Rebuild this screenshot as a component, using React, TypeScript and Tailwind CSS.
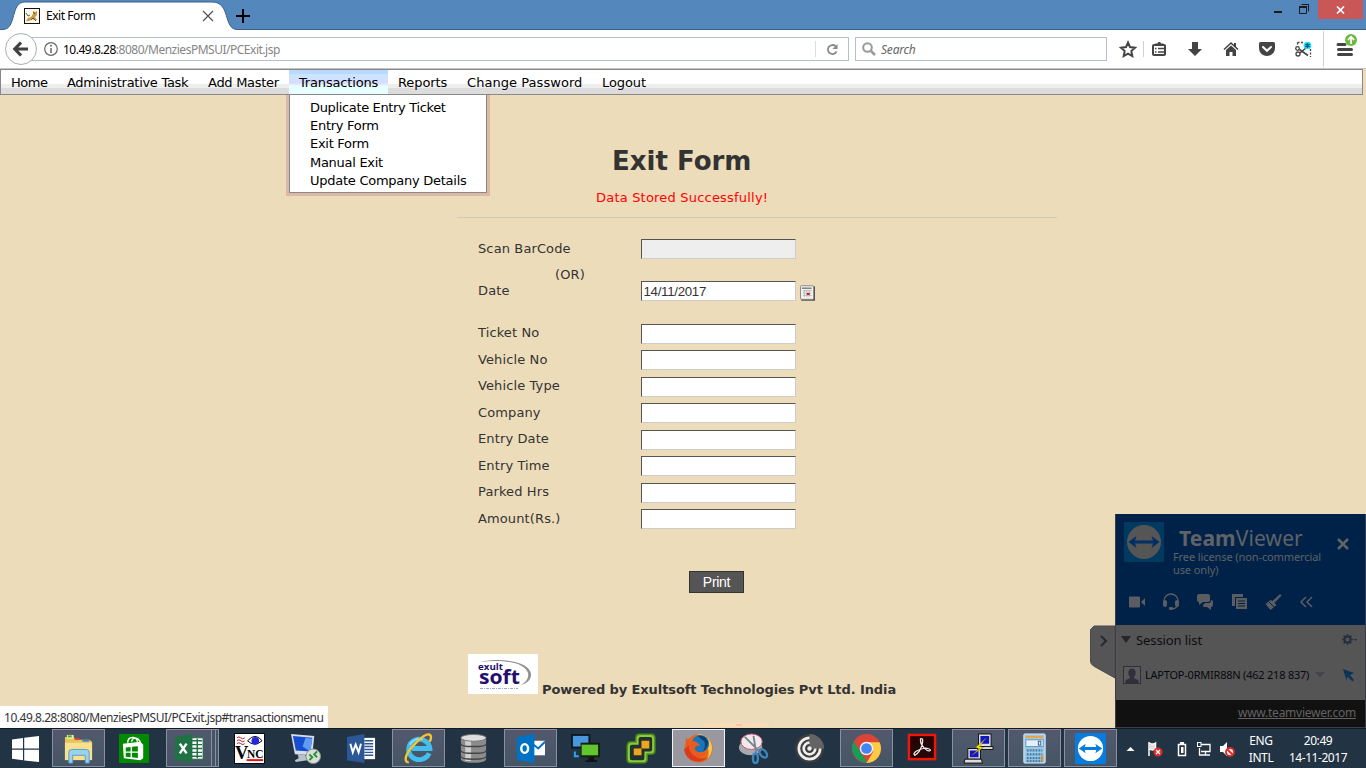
import React from "react";
import type { ReactNode } from "react";

const menus = [
  { label: "Home", cls: "w-[56px] tracking-[-0.45px]" },
  { label: "Administrative Task", cls: "w-[141px] tracking-[-0.29px]" },
  { label: "Add Master", cls: "w-[91px] tracking-[-0.28px]" },
  {
    label: "Transactions",
    cls: "w-[99px] tracking-[-0.16px] bg-[linear-gradient(#b9daff_0_4px,#cce4ff_4px_9px,#d5deff_9px_13px,#e8ffff_16px)]",
    open: true,
  },
  { label: "Reports", cls: "w-[69px] tracking-[-0.08px]" },
  { label: "Change Password", cls: "w-[135px] tracking-[0.05px]" },
  { label: "Logout", cls: "w-[64px] tracking-[-0.08px]" },
];

const submenu = [
  { label: "Duplicate Entry Ticket", cls: "tracking-[-0.35px]" },
  { label: "Entry Form", cls: "tracking-[-0.28px]" },
  { label: "Exit Form", cls: "tracking-[-0.28px]" },
  { label: "Manual Exit", cls: "tracking-[-0.28px]" },
  { label: "Update Company Details", cls: "tracking-[-0.26px]" },
];

const fields = [
  "Ticket No",
  "Vehicle No",
  "Vehicle Type",
  "Company",
  "Entry Date",
  "Entry Time",
  "Parked Hrs",
  "Amount(Rs.)",
];

function TitleBar() {
  return (
    <div className="flex h-[30px] w-full bg-[#5487bb]">
      <div className="relative h-[30px] w-[236px] shrink-0">
        <svg className="absolute inset-0" width="236" height="30" viewBox="0 0 236 30">
          <path d="M0 29.5H3C17 29 10 2 25 2H212C231 2 223 29 237 29.5V30H0Z" fill="#fff" />
          <path d="M0 29.5H3C17 29 10 2 25 2H212C231 2 223 29 237 29.5" fill="none" stroke="#36618f" />
        </svg>
        <div className="relative flex h-full items-center pt-[2px] pl-6">
          <svg width="16" height="16" viewBox="0 0 16 16">
            <rect x=".5" y=".5" width="15" height="15" fill="#faf6e8" stroke="#111" />
            <path d="M2 13l2-3 3-1 2-3V3l2 1 2-1v4l-2 2 2 3h-3l-2-1-3 2z" fill="#c99a43" />
            <path d="M2 5l2 3 2-1M7 12l2-2 3 3M9 4l2 2" stroke="#66604e" fill="none" />
          </svg>
          <span className="ml-[6px] w-[150px] text-[12px] tracking-[-0.45px] text-black">Exit Form</span>
          <svg className="ml-[6px]" width="12" height="12" viewBox="0 0 12 12">
            <path d="M1 1l10 10M11 1L1 11" stroke="#555" strokeWidth="1.3" />
          </svg>
        </div>
      </div>
      <div className="flex flex-1 items-start justify-between border-b border-[#36618f]">
        <svg className="mt-[9px]" width="14" height="14" viewBox="0 0 14 14">
          <path d="M7 0v14M0 7h14" stroke="#000" strokeWidth="2" />
        </svg>
        <div className="flex items-start pr-[3px]">
          <svg width="44" height="20" viewBox="0 0 44 20">
            <path d="M0 12h8" stroke="#1b1b1b" strokeWidth="2" />
            <path d="M25.5 6.5h7v7h-7zM27.5 4.500h7v7" stroke="#1b1b1b" fill="none" />
            <path d="M25 7h8" stroke="#1b1b1b" strokeWidth="2" />
          </svg>
          <div className="flex h-[19px] w-[45px] items-center justify-center bg-[#c95757]">
            <svg width="9" height="8" viewBox="0 0 9 8">
              <path d="M1 .5l7 7M8 .5l-7 7" stroke="#fff" strokeWidth="1.7" />
            </svg>
          </div>
        </div>
      </div>
    </div>
  );
}

function ToolbarIcons() {
  return (
    <svg className="shrink-0" width="259" height="38" viewBox="1107 30 259 38">
      <path d="M1128 42.500l2 4.600 5 .6-3.700 3.400 1 5-4.300-2.500-4.300 2.500 1-5-3.700-3.400 5-.6z" fill="none" stroke="#444" strokeWidth="2" />
      <path d="M1143.500 41v16M1323.500 31v36" stroke="#d0d0d0" />
      <rect x="1153" y="45" width="12" height="10" rx="1" fill="none" stroke="#444" strokeWidth="2" />
      <path d="M1155 46v-2.500h2.500c0-2 3.500-2 3.500 0h2.500V46z" fill="#444" />
      <path d="M1155 48.500h1.500M1158 48.500h6M1155 52h1.500M1158 52h6" stroke="#444" strokeWidth="1.500" />
      <path d="M1192 42h6v7h4l-7 7-7-7h4z" fill="#444" />
      <path d="M1224 49.500l7-6.500 7 6.500" fill="none" stroke="#444" strokeWidth="1.600" />
      <path d="M1226 50l5-4.500 5 4.500V56h-3.500v-4h-3v4h-3.500z" fill="#444" />
      <path d="M1234 43h2v4h-2z" fill="#444" />
      <path d="M1260.500 42h13q1.500 0 1.500 1.500V48c0 5-4 8-8 8s-8-3-8-8v-4.500q0-1.500 1.500-1.500z" fill="#444" />
      <path d="M1263 47l4 3.800 4-3.800" stroke="#fff" strokeWidth="2" fill="none" strokeLinecap="round" />
      <path d="M1297.500 42.500h6M1297.500 42.500v4M1310.500 49v8" stroke="#444" strokeWidth="1.300" strokeDasharray="2 1.500" fill="none" />
      <circle cx="1297.500" cy="48.500" r="1.800" fill="none" stroke="#444" strokeWidth="1.300" />
      <circle cx="1298" cy="54" r="2" fill="none" stroke="#444" strokeWidth="1.300" />
      <path d="M1299.500 49.500l8.500 6M1300 53l6-5" stroke="#444" strokeWidth="1.600" />
      <circle cx="1307.500" cy="45.500" r="3.800" fill="#19e5f5" />
      <path d="M1307.500 43v5M1305.300 44.200l4.400 2.600M1309.700 44.200l-4.400 2.600" stroke="#14508c" strokeWidth="1.300" />
      <path d="M1338 44.500h7M1338.500 49.500h13M1338.500 54.500h13" stroke="#444" strokeWidth="3" strokeLinecap="round" />
      <circle cx="1351" cy="40" r="6" fill="#6fb83f" />
      <path d="M1351 44v-7M1347.800 40l3.200-3.200 3.200 3.200" stroke="#fff" strokeWidth="1.700" fill="none" />
    </svg>
  );
}

function NavBar() {
  return (
    <div className="flex h-[39px] w-full items-center border-b border-[#c4c4c4] bg-white">
      <div className="relative flex h-full w-[849px] shrink-0 items-center pl-[30px]">
        <div className="flex h-6 flex-1 items-center border border-[#b5bfcc] bg-white pl-[13px]">
          <svg width="14" height="14" viewBox="0 0 14 14">
            <circle cx="7" cy="7" r="6.300" fill="none" stroke="#666" strokeWidth="1.200" />
            <path d="M7 6v5" stroke="#666" strokeWidth="1.500" />
            <circle cx="7" cy="3.800" r="1" fill="#666" />
          </svg>
          <span className="mt-px ml-[5px] flex-1 text-[12px] tracking-[-0.49px] whitespace-nowrap text-black">
            10.49.8.28<span className="text-[#858585]">:8080/MenziesPMSUI/PCExit.jsp</span>
          </span>
          <div className="flex h-4 w-[33px] items-center justify-center border-l border-[#ddd]">
            <svg width="13" height="13" viewBox="0 0 13 13">
              <path d="M10.500 8.500A4.500 4.500 0 1 1 9.500 3.200" fill="none" stroke="#888" strokeWidth="1.800" />
              <path d="M11.500 1V6H6.500z" fill="#888" />
            </svg>
          </div>
        </div>
        <svg className="absolute top-[3px] left-[4px]" width="34" height="34" viewBox="0 0 34 34">
          <circle cx="17" cy="16" r="15.500" fill="#fdfdfd" stroke="#a9b0b8" />
          <path d="M11 16h13M17 9.500L10.800 16l6.200 6.500" fill="none" stroke="#404040" strokeWidth="3.200" />
        </svg>
      </div>
      <div className="ml-[6px] flex h-6 w-[252px] shrink-0 items-center border border-[#b5bfcc] pl-[6px]">
        <svg width="14" height="14" viewBox="0 0 14 14">
          <circle cx="5.500" cy="5.500" r="4.300" fill="none" stroke="#999" strokeWidth="2" />
          <path d="M9 9l4 4" stroke="#999" strokeWidth="2.500" />
        </svg>
        <span className="mt-px ml-[5px] text-[12px] tracking-[-0.2px] text-[#666] italic">Search</span>
      </div>
      <ToolbarIcons />
    </div>
  );
}

function MenuBar() {
  return (
    <nav className="flex h-[26px] w-[1363px] border border-[#888] bg-[linear-gradient(#fff_0_14px,#eee_14px_18px,#dcdcdc_18px)] font-['DejaVu_Sans',sans-serif] text-[13px] text-black">
      {menus.map((m) => (
        <div key={m.label} className={`relative h-6 shrink-0 ${m.cls}`}>
          <div className="pl-[10px] leading-[25px] whitespace-nowrap">{m.label}</div>
          {m.open && (
            <div className="absolute top-[25px] -left-[3px] w-[204px] bg-[#dcb9a5] px-[3px] pb-[3px]">
              <ul className="h-[98px] w-[198px] border border-t-0 border-[#888] bg-white pt-1 pl-5">
                {submenu.map((s) => (
                  <li key={s.label} className={`h-[18.200px] leading-[18px] whitespace-nowrap ${s.cls}`}>{s.label}</li>
                ))}
              </ul>
            </div>
          )}
        </div>
      ))}
    </nav>
  );
}

function Field({ label, value, disabled }: { label: string; value?: string; disabled?: boolean }) {
  return (
    <>
      <span className="w-[163px] pt-[0.500px] leading-[17px]">{label}</span>
      <div
        className={`h-5 w-[154.500px] border border-t-[#555] border-r-[#ccc] border-b-[#ccc] border-l-[#555] pl-[1.500px] font-['Liberation_Sans',sans-serif] text-[13.300px] leading-[19px] tracking-[-0.3px] ${disabled ? "bg-[#eee]" : "bg-white"}`}
      >
        {value}
      </div>
    </>
  );
}

function ExitForm() {
  return (
    <main className="flex flex-1 flex-col pl-[457px] font-['DejaVu_Sans',sans-serif] text-[13px] tracking-[0.12px] text-[#333]">
      <h1 className="mt-[50px] h-8 pl-[155px] text-[26px] leading-8 font-bold tracking-[0px]">Exit Form</h1>
      <p className="mt-[11px] h-5 pl-[139px] leading-5 tracking-[0.2px] text-[#f00]">Data Stored Successfully!</p>
      <div className="mt-[9px] w-[600px] border-t border-[#d2c8b4]" />
      <div className="mt-[21px] flex h-[28px] pl-[21px]">
        <Field label="Scan BarCode" disabled />
      </div>
      <div className="-mt-px h-[15px] pl-[98px] leading-[18px]">(OR)</div>
      <div className="flex h-[42.900px] pl-[21px]">
        <Field label="Date" value="14/11/2017" />
        <svg className="mt-[4px] ml-[4px]" width="15.500" height="16" viewBox="0 0 16 16">
          <rect x="1" y="1" width="15" height="15" rx="1" fill="#555" />
          <rect x=".5" y=".5" width="13.500" height="14" rx="1" fill="#f4f2ee" stroke="#888" />
          <path d="M2 3h10" stroke="#444" />
          <path d="M3 5.500h9M3 8h9M3 10.500h9M4.500 5v7M7 5v7M9.500 5v7" stroke="#bbb" />
          <rect x="7" y="8" width="3" height="2" fill="#b5222b" />
        </svg>
      </div>
      <div className="flex h-[247px] flex-col">
        {fields.map((f) => (
          <div key={f} className="flex h-[26.500px] shrink-0 pl-[21px]">
            <Field label={f} />
          </div>
        ))}
      </div>
      <button className="ml-[232px] h-[22px] w-[55px] border border-[#333] bg-[#555] font-['Liberation_Sans',sans-serif] text-[14px] leading-5 tracking-[-0.3px] text-white">
        Print
      </button>
      <div className="mt-[61px] flex items-end pl-[11px]">
        <svg width="70" height="40" viewBox="0 0 70 40" fontFamily="Open Sans" letterSpacing="0" fontWeight="bold" fill="#24106c">
          <rect width="70" height="40" fill="#fff" />
          <path d="M12 8C35 3 62 8 63 20C63.500 26 58 30 53 31C58 28 61 24 60 19C57 8 34 5 12 8Z" fill="#909090" />
          <text x="10" y="15.500" fontSize="9.500" textLength="25" lengthAdjust="spacingAndGlyphs">exult</text>
          <text x="11" y="30" fontSize="20" textLength="41" lengthAdjust="spacingAndGlyphs">soft</text>
          <path d="M12 34.500h38" stroke="#aaa6be" strokeWidth="1" strokeDasharray="3 1 1 1" />
        </svg>
        <span className="mb-[-4px] ml-1 leading-4 font-bold tracking-[-0.1px] whitespace-nowrap">
          Powered by Exultsoft Technologies Pvt Ltd. India
        </span>
      </div>
      <div className="mt-auto flex items-end">
        <svg className="ml-[247px]" width="66" height="6" viewBox="0 0 66 6">
          <path d="M0 1.500h65v3H0z" fill="#fddcb3" />
          <path d="M22 1h18M54 .5h10" stroke="#f3d8c8" />
          <path d="M32 3h6" stroke="#fdc49e" strokeWidth="2" />
        </svg>
      </div>
    </main>
  );
}

function TeamViewerPanel() {
  return (
    <aside className="absolute top-[514px] right-0 flex h-[214px] w-[276px] tracking-normal">
      <svg className="mt-[111px] shrink-0" width="25" height="56" viewBox="0 0 25 56">
        <path d="M25 1H4L.5 4.500V36q0 3 3 5L25 53z" fill="#555" stroke="#4a4a55" />
        <path d="M11 11l5 5-5 5" stroke="#222a3a" strokeWidth="2" fill="none" />
      </svg>
      <div className="flex w-[251px] flex-col border-x border-[#3d3d4a]">
        <div className="h-[111px] bg-[#002248]">
          <div className="flex h-[70px] pt-2 pl-2">
            <svg className="shrink-0" width="40" height="40" viewBox="0 0 40 40">
              <rect width="40" height="40" rx="1" fill="#003a60" />
              <circle cx="20" cy="20" r="17" fill="#555" />
              <path d="M4.500 20l8-6-1.500 4.500h18L27.500 14l8 6-8 6 1.500-4.500H11l1.500 4.500z" fill="#002f66" />
            </svg>
            <div className="ml-[9px] w-[152px] shrink-0 text-[#5f6266]">
              <div className="pl-[6px] text-[21px] leading-8 tracking-[0.120px]">
                <b>Team</b>Viewer
              </div>
              <div className="-mt-[4px] text-[11px] leading-[13px] tracking-[-0.1px] whitespace-nowrap">
                Free license (non-commercial
                <br />
                use only)
              </div>
            </div>
            <svg className="mt-4 ml-[12px]" width="12" height="12" viewBox="0 0 12 12">
              <path d="M1 1l10 10M11 1L1 11" stroke="#626568" strokeWidth="2.500" />
            </svg>
          </div>
          <svg width="249" height="34" viewBox="1116 584 249 34" fill="#5b5d60">
            <rect x="1129" y="596.500" width="11" height="11" rx="1" />
            <path d="M1141 602l4-4v8z" />
            <path d="M1164 603v-2a7 7 0 0 1 14 0v2c0 4-2 5.500-6 6" fill="none" stroke="#5b5d60" strokeWidth="1.300" />
            <rect x="1163" y="600" width="4" height="7" rx="2" />
            <rect x="1175" y="600" width="4" height="7" rx="2" />
            <rect x="1169" y="607" width="4" height="3" rx="1" />
            <path d="M1199 594h9q2 0 2 2v4q0 2-2 2h-5l-4 3v-3q-2 0-2-2v-4q0-2 2-2z" />
            <path d="M1211 600q2 0 2 2v3q0 2-2 2v3l-4-3h-3q-1 0-1-2l2-2h4q2 0 2-3z" />
            <path d="M1232 594h11v3h-8v9h-3z" />
            <path d="M1236 598h11v11h-11z" />
            <path d="M1238 601h7M1238 603.500h7M1238 606h7" stroke="#002248" />
            <path d="M1280 594l1.500 1.500-7 7.500 2 2-6 5-5-6 5-4 2 1z" />
            <path d="M1269 602l5 5" stroke="#002248" />
            <path d="M1306 597l-5 5 5 5M1312 597l-5 5 5 5" stroke="#5b5d60" strokeWidth="1.500" fill="none" />
          </svg>
        </div>
        <div className="h-[75px] bg-[#555]">
          <div className="flex h-[30px] items-center pl-[5px]">
            <svg width="10" height="8" viewBox="0 0 10 8">
              <path d="M0 0h10L5 7z" fill="#24252d" />
            </svg>
            <span className="mt-[2px] ml-[5px] w-[206px] text-[13px] tracking-[-0.1px] text-[#0e0e12]">Session list</span>
            <svg width="17" height="12" viewBox="0 0 17 12">
              <circle cx="5.500" cy="5.500" r="3" fill="none" stroke="#24303f" strokeWidth="2" />
              <path d="M5.500 0v2.500M5.500 8.500V11M0 5.500h2.500M8.500 5.500H11M1.600 1.600l2 2M7.400 7.400l2 2M9.400 1.600l-2 2M3.600 7.400l-2 2" stroke="#24303f" strokeWidth="1.500" />
              <path d="M11.500 5h4l-2 2z" fill="#24303f" />
            </svg>
          </div>
          <div className="mt-[10px] flex h-5 items-center pl-[7px]">
            <svg className="shrink-0" width="18" height="18" viewBox="0 0 18 18">
              <rect x=".5" y=".5" width="17" height="17" fill="#5a5a5d" stroke="#303038" />
              <path d="M9 2.500c4.500 0 4.500 6.500 2 8.500l.5 1.500 4 1.500v3h-13v-3l4-1.500.5-1.500c-2.500-2-2.500-8.500 2-8.500z" fill="#30303c" />
            </svg>
            <span className="ml-1 w-[170px] shrink-0 text-[11px] tracking-[-0.22px] whitespace-nowrap text-[#08080c]">
              LAPTOP-0RMIR88N (462 218 837)
            </span>
            <svg width="41" height="14" viewBox="0 0 41 14">
              <path d="M0 4h10L5 9.500z" fill="#44444a" />
              <path d="M28 1l11 4-4 2 4 5-1.500 1.500-5-5-1 4z" fill="#0c3358" />
            </svg>
          </div>
        </div>
        <div className="h-[27px] bg-[#111] pr-[9px] text-right text-[12px] leading-[25px] tracking-[-0.25px] text-[#626262] underline">
          www.teamviewer.com
        </div>
        <div className="h-px bg-[#3d3d4a]" />
      </div>
    </aside>
  );
}

function Icon({ children }: { children: ReactNode }) {
  return (
    <svg width="31" height="31" viewBox="0 0 32 32">
      {children}
    </svg>
  );
}

type Task = { id: string; state?: "open" | "focus" | "stack"; art: ReactNode };

const tasks: Task[] = [
  {
    id: "explorer",
    state: "open",
    art: (
      <>
        <path d="M2 4h9l2 3h14l3 2v18H2z" fill="#e7c35c" />
        <path d="M4 2h7v4H4z" fill="#f7e9a7" />
        <path d="M5 3.500h4" stroke="#3cab3c" strokeWidth="2" />
        <path d="M12 6h5" stroke="#d8432c" strokeWidth="2" />
        <path d="M20 8h7" stroke="#3b87cf" strokeWidth="2" />
        <path d="M2 10h28v18H2z" fill="#f8e08c" />
        <path d="M6 31V20q0-3 3-3h15q3 0 3 3v11h-4v-8H10v8z" fill="#99d2ee" stroke="#599ec6" />
      </>
    ),
  },
  {
    id: "store",
    art: (
      <>
        <rect x="1" y="1" width="31" height="30" fill="#008a00" />
        <path d="M5 11l18-2 3 3v14l-3 2-17-2z" fill="#fff" />
        <path d="M10 10c0-7 10-7 10-1M14 9c1-6 8-4 9 1" stroke="#fff" fill="none" strokeWidth="1.500" />
        <path d="M8 15l5-.5v4.500H8zM14.500 14.300l6-.5v5.200h-6zM8 20.500h5V25l-5-.5zM14.500 20.500h6v5.200l-6-.6z" fill="#008a00" />
      </>
    ),
  },
  {
    id: "excel",
    state: "stack",
    art: (
      <>
        <path d="M17 5h13v22H17z" fill="#fff" stroke="#207245" />
        <path d="M18 8h11M18 12h11M18 16h11M18 20h11M18 24h11M24 6v20" stroke="#207245" strokeWidth="1.500" />
        <path d="M1 4l18-3v30L1 28z" fill="#207245" />
        <path d="M6 11l7 10M13 11L6 21" stroke="#fff" strokeWidth="2.500" />
      </>
    ),
  },
  {
    id: "vnc",
    art: (
      <>
        <path d="M.5.5h31v31H.5z" fill="#fff" stroke="#000" />
        <path d="M3 5q2-2 4 0t4 0M3 8q2-2 4 0t4 0M3 11q2-2 4 0t4 0" stroke="#b3202e" fill="none" />
        <path d="M14 8q8-9 15 0q-8 7-15 0z" fill="#fff" stroke="#000" />
        <circle cx="22" cy="8" r="4" fill="#2626dd" />
        <text x="1" y="27" fontSize="19" fontWeight="bold" fontFamily="Liberation Serif">V</text>
        <text x="13.500" y="26" fontSize="13" fontWeight="bold" textLength="17" lengthAdjust="spacingAndGlyphs" fontFamily="Liberation Serif">NC</text>
        <path d="M13 28h17" stroke="#e01010" strokeWidth="2" />
      </>
    ),
  },
  {
    id: "remote",
    art: (
      <>
        <path d="M1 1l24 2-2 20-18-1z" fill="#d8dee8" />
        <path d="M3 3l20 2-2 14-15-1z" fill="#164ed0" />
        <path d="M16 5l7 1-2 13-8-5z" fill="#5f9cf3" />
        <path d="M8 22l8 1 2 5-12 2-1-2 4-2z" fill="#bac1c9" />
        <circle cx="24" cy="24" r="7.500" fill="#d9ded8" stroke="#89928a" />
        <path d="M20 22l3 3-3 3M28 19l-3 3 3 3" stroke="#259238" strokeWidth="2" fill="none" />
      </>
    ),
  },
  {
    id: "word",
    art: (
      <>
        <path d="M17 5h13v22H17z" fill="#fff" />
        <path d="M19 8h9M19 11h9M19 14h9M19 17h9M19 20h9M19 23h9" stroke="#2b5797" strokeWidth="1.500" />
        <path d="M1 4l18-3v30L1 28z" fill="#2b5797" />
        <path d="M4.500 11l2.500 9 3-8 3 8 2.500-9" stroke="#fff" strokeWidth="2" fill="none" />
      </>
    ),
  },
  {
    id: "ie",
    state: "open",
    art: (
      <>
        <path d="M27 21a11 10.500 0 1 1 .8-5H9" fill="none" stroke="#44bdef" strokeWidth="5" />
        <path d="M7 12C10 7 15 5 20 7" fill="none" stroke="#a2e8ff" strokeWidth="1.500" />
        <path d="M6 30c-5 1-4-7 2-14S24-1 28 2q2 2-.5 7" fill="none" stroke="#f3c52e" strokeWidth="2.500" />
      </>
    ),
  },
  {
    id: "db",
    art: (
      <>
        <path d="M3 5v22c0 5 26 5 26 0V5z" fill="#8c8c8c" />
        <path d="M9 6v23M12 6v23" stroke="#d0d0d0" strokeWidth="3" />
        <ellipse cx="16" cy="5" rx="13" ry="3.500" fill="#dedede" stroke="#777" />
        <path d="M3 11c0 4 26 4 26 0M3 18c0 4 26 4 26 0M3 24c0 4 26 4 26 0" fill="none" stroke="#454545" strokeWidth="1.500" />
      </>
    ),
  },
  {
    id: "outlook",
    state: "open",
    art: (
      <>
        <path d="M18 8h13v15H18z" fill="#fff" />
        <path d="M18 11l6 5 7-7" stroke="#0072c6" strokeWidth="2" fill="none" />
        <path d="M2 4l18-3v30L2 28z" fill="#0072c6" />
        <ellipse cx="10" cy="16" rx="3.500" ry="4.500" fill="none" stroke="#fff" strokeWidth="2.500" />
      </>
    ),
  },
  {
    id: "monitors",
    art: (
      <>
        <path d="M1 1h20v15H1z" fill="#0d1822" />
        <path d="M3 3h16v11H3z" fill="#4897df" />
        <path d="M11 10h20v15H11z" fill="#14200f" />
        <path d="M12 12h17v11H12z" fill="#60c52e" />
        <path d="M19 25h6v3h3v2H16v-2h3z" fill="#111" />
        <path d="M5 19v5h4" stroke="#30a6ee" strokeWidth="2" fill="none" />
      </>
    ),
  },
  {
    id: "vsphere",
    art: (
      <>
        <path d="M11 10V5q0-3 3-3h12q3 0 3 3v13q0 3-3 3h-5v6q0 3-3 3H5q-3 0-3-3V14q0-4 3-4z" fill="#fff" stroke="#4e9117" strokeWidth="3" />
        <path d="M12 11V6q0-3 3-3h10q3 0 3 3v11q0 3-3 3h-5v6q0 3-3 3H6q-3 0-3-3V15q0-4 3-4z" fill="#22332f" stroke="#8ccc3c" strokeWidth="2" />
        <path d="M16 8h8v8h-8zM8 16h8v7H8z" fill="#f0a51e" />
      </>
    ),
  },
  {
    id: "firefox",
    state: "focus",
    art: (
      <>
        <circle cx="16" cy="16" r="14.500" fill="#e8681d" />
        <path d="M15 1c14 0 20 16 10 26q3-6 0-13Q25 6 15 1z" fill="#f9cb44" />
        <circle cx="18" cy="11" r="9" fill="#1876bb" />
        <path d="M15 3q7-2 11 6-1 7-5 10 4-9-1-12z" fill="#123e76" />
        <path d="M3 5l5 4q4-2 7 1l3 3q-6 0-6 3 2 6 12 3-3 8-12 6Q2 22 3 5z" fill="#eb5a20" />
        <path d="M1 17q2 10 11 12 8 2 13-4-7 3-13-1T6 13q-2 1-5 4z" fill="#d63c1d" />
      </>
    ),
  },
  {
    id: "snip",
    art: (
      <>
        <ellipse cx="13" cy="15" rx="12" ry="8" fill="#a8aab0" />
        <ellipse cx="14" cy="9" rx="11" ry="8" fill="#f2e9ed" stroke="#c75777" />
        <path d="M7 4l15 15M16 3l3 19" stroke="#76858f" strokeWidth="2" />
        <ellipse cx="26" cy="21" rx="3" ry="5" transform="rotate(-40 26 21)" fill="none" stroke="#3c88bc" strokeWidth="2.500" />
        <ellipse cx="18" cy="26" rx="2.500" ry="5" fill="none" stroke="#3c88bc" strokeWidth="2.500" />
      </>
    ),
  },
  {
    id: "receiver",
    art: (
      <>
        <circle cx="16" cy="16" r="15" fill="#3c3c3c" />
        <path d="M16 1a15 15 0 0 1 15 15h-15z" fill="#646464" />
        <path d="M27 16a11 11 0 1 1-11-11M22 16a6 6 0 1 1-6-6" fill="none" stroke="#eee" strokeWidth="2.800" />
        <circle cx="16" cy="16" r="2.300" fill="#eee" />
      </>
    ),
  },
  {
    id: "chrome",
    state: "open",
    art: (
      <>
        <circle cx="16" cy="16" r="15" fill="#dc4437" />
        <path d="M3 8.500l7 12 7 10A15 15 0 0 1 3 8.500z" fill="#139e5a" />
        <path d="M16 9.500h13.500a15 15 0 0 1-13.500 21.500l7-12z" fill="#fecc43" />
        <circle cx="16" cy="16" r="7" fill="#f2f2f2" />
        <circle cx="16" cy="16" r="5.500" fill="#4285f4" />
      </>
    ),
  },
  {
    id: "acrobat",
    art: (
      <>
        <rect x="3" y="2" width="27" height="25" fill="#270506" stroke="#f11708" strokeWidth="2.500" />
        <path d="M15 6q3-1 2 4c-1 7-5 12-8 13-3-2 3-6 9-7 4-1 8 1 7 2-3 2-10-5-10-10z" fill="none" stroke="#eee" strokeWidth="1.300" />
      </>
    ),
  },
  {
    id: "putty",
    state: "open",
    art: (
      <>
        <path d="M16 1h13v13H16zM5 16h13v11H5z" fill="#ddd" stroke="#111" />
        <path d="M18 3h9v8h-9zM7 18h9v7H7z" fill="#1313c7" />
        <path d="M16 14h15v3H15zM2 27h17l1 4H1z" fill="#ddd" stroke="#111" />
        <path d="M24 5L13 15l4 1-8 7 12-8-4-1z" fill="#fff200" stroke="#6c651b" strokeWidth=".5" />
      </>
    ),
  },
  {
    id: "calc",
    state: "open",
    art: (
      <>
        <rect x="5" y="1" width="22" height="30" rx="1" fill="#9ec9e4" stroke="#d7edf8" />
        <path d="M7 4h18" stroke="#f0a23b" strokeWidth="2" />
        <rect x="7" y="7" width="18" height="7" fill="#e3f0f8" stroke="#6695b8" />
        <rect x="20" y="8.500" width="2.500" height="4" fill="none" stroke="#35618f" />
        <path d="M8 18h16M8 22h16M8 26h16M8 29h16" stroke="#487fa9" strokeWidth="2.200" strokeDasharray="2 1" />
        <path d="M24 23v6" stroke="#e88e25" strokeWidth="2" />
      </>
    ),
  },
  {
    id: "teamviewer",
    state: "open",
    art: (
      <>
        <rect width="32" height="32" rx="1" fill="#087bdf" />
        <circle cx="16" cy="16" r="13" fill="#fff" />
        <path d="M4 16l7-5-1 3.500h12L21 11l7 5-7 5 1-3.500H10l1 3.500z" fill="#087bdf" />
      </>
    ),
  },
];

const stateClass = {
  open: "w-[53px] border border-[#8990a1] bg-linear-to-b from-[#515a6e] to-[#465564] shadow-[inset_0_2px_2px_#5b5368]",
  focus: "w-[53px] border border-[#f3f3f5] bg-[#99979f]",
  stack: "w-[46px] border border-[#8990a1] bg-linear-to-b from-[#515a6e] to-[#465564] shadow-[inset_0_2px_2px_#5b5368]",
  idle: "w-[51px]",
};

function Taskbar() {
  return (
    <footer className="flex h-10 w-full border-t border-[#101b27] bg-[#223344]">
      <div className="flex w-[52px] shrink-0 items-center pl-3">
        <svg width="27" height="26" viewBox="0 0 27 26">
          <path d="M0 3.500l11-1.600v10.600H0zM12.200 1.700L27 0v12.500H12.200zM0 13.700h11v10.500L0 22.700zM12.200 13.700H27V26l-14.800-1.600z" fill="#fff" />
        </svg>
      </div>
      {tasks.map((t) => (
        <div key={t.id} className={`flex shrink-0 ${t.state === "stack" ? "ml-[2px] w-[58px]" : "w-14"}`}>
          <div className={`flex h-[38px] items-center justify-center ${stateClass[t.state ?? "idle"]}`}>
            <Icon>{t.art}</Icon>
          </div>
          {t.state === "stack" && (
            <>
              <div className="h-[38px] w-1 border border-l-0 border-[#8990a1] bg-[#465564]" />
              <div className="h-[38px] w-[3px] border border-l-0 border-[#8990a1] bg-[#465564]" />
            </>
          )}
        </div>
      ))}
      <div className="flex flex-1 items-center text-[12px] text-white">
        <svg className="shrink-0" width="120" height="39" viewBox="1120 729 120 39">
          <path d="M1126.500 751h8l-4-4z" fill="#fff" />
          <path d="M1149 742v14M1149.500 743q3 2 6 0v6q-3 2-6 0" stroke="#fff" strokeWidth="1.500" fill="#ddd" />
          <circle cx="1158" cy="752" r="4.500" fill="#dc2b29" />
          <path d="M1156 750l4 4M1160 750l-4 4" stroke="#fff" strokeWidth="1.300" />
          <path d="M1178.500 744.500h7v11h-7z" fill="none" stroke="#fff" strokeWidth="1.500" />
          <path d="M1180 742h4v2h-4z" fill="#fff" />
          <path d="M1181 747h2.500v6h-2.500z" fill="#fff" />
          <path d="M1201 744.500h9v7h-9M1205.500 752v3M1202 755h8M1199.500 748v7h3" stroke="#fff" strokeWidth="1.300" fill="none" />
          <rect x="1197.500" y="742.500" width="3.500" height="4" fill="none" stroke="#fff" />
          <path d="M1220 746h3l4-4v14l-4-4h-3z" fill="#fff" />
          <circle cx="1230" cy="752" r="4" fill="#eee" stroke="#dc2b29" strokeWidth="1.800" />
          <path d="M1227.500 749.500l5 5" stroke="#dc2b29" strokeWidth="1.800" />
        </svg>
        <div className="w-[42px] shrink-0 text-center leading-[17px] tracking-[-0.4px]">ENG<br />INTL</div>
        <div className="ml-[4px] w-[64px] shrink-0 text-center leading-[17px] tracking-[-0.45px] whitespace-nowrap">20:49<br />14-11-2017</div>
      </div>
    </footer>
  );
}

export default function App() {
  return (
    <div className="relative flex h-[768px] w-[1366px] flex-col overflow-hidden bg-[#eddcba] font-['Noto_Sans',sans-serif]">
      <TitleBar />
      <NavBar />
      <MenuBar />
      <ExitForm />
      <div className="absolute top-[706px] left-0 h-[22px] w-[328px] bg-white pl-1 text-[12px] leading-[24px] tracking-[-0.47px] whitespace-nowrap text-[#333]">
        10.49.8.28:8080/MenziesPMSUI/PCExit.jsp#transactionsmenu
      </div>
      <TeamViewerPanel />
      <Taskbar />
    </div>
  );
}
